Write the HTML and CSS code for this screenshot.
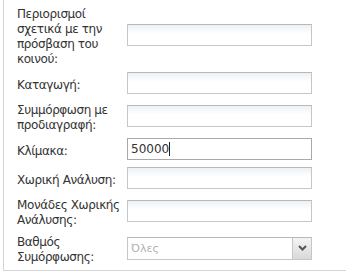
FILE: index.html
```html
<!DOCTYPE html>
<html lang="el">
	<head>
		<meta charset="UTF-8" />
		<title>Φίλτρα</title>
		<link rel="stylesheet" href="styles.css">
	</head>
	<body>
		<div class="panel">
			<div class="form">
				<label class="label">Περιορισμοί σχετικά με την πρόσβαση του κοινού:</label>
				<input class="field" type="text" />

				<label class="label">Καταγωγή:</label>
				<input class="field" type="text" />

				<label class="label">Συμμόρφωση με προδιαγραφή:</label>
				<input class="field" type="text" />

				<label class="label">Κλίμακα:</label>
				<div class="field focus"><span>50000</span><i class="caret"></i></div>

				<label class="label">Χωρική Ανάλυση:</label>
				<input class="field" type="text" />

				<label class="label">Μονάδες Χωρικής Ανάλυσης:</label>
				<input class="field" type="text" />

				<label class="label">Βαθμός Συμόρφωσης:</label>
				<div class="field select">
					<span class="placeholder">Όλες</span>
					<span class="trigger">
						<svg width="9" height="6" viewBox="0 0 9 6"><path d="M1 1 L4.5 4.5 L8 1" fill="none" stroke="#555" stroke-width="2"/></svg>
					</span>
				</div>
			</div>
		</div>
	</body>
</html>
```

FILE: styles.css
```css
body {
	margin: 0;
	padding: 0;
	background: #fff;
	font-family: "DejaVu Sans", Tahoma, sans-serif;
	font-size: 12px;
	color: #333;
}

.panel {
	width: 335px;
	margin-left: 3px;
	border: 1px solid #d4d4d4;
	border-top: none;
	padding: 5px 0 7px 13px;
}

.form {
	display: grid;
	grid-template-columns: 110px 185px;
	row-gap: 7px;
	align-items: center;
}

.label {
	line-height: 15px;
	letter-spacing: -0.4px;
	padding-top: 2px;
	margin-bottom: -2px;
}

.field {
	box-sizing: border-box;
	width: 185px;
	height: 22px;
	margin: 0;
	padding: 0 3px;
	border: 1px solid #c6c6c6;
	border-top-color: #b8b8b8;
	background: linear-gradient(#edf1f5, #fff 45%);
	font-family: "DejaVu Sans", Tahoma, sans-serif;
	font-size: 12px;
	color: #333;
	outline: none;
}

.focus {
	display: flex;
	align-items: center;
	border-color: #a9a9a9;
	background: #fff;
}

.caret {
	width: 1px;
	height: 14px;
	background: #222;
}

.select {
	display: flex;
	align-items: center;
	justify-content: space-between;
	height: 23px;
	padding: 0 0 0 3px;
	background: #fff;
}

.placeholder {
	color: #b0b0b0;
	font-size: 11px;
}

.trigger {
	display: flex;
	align-items: center;
	justify-content: center;
	width: 18px;
	height: 21px;
	border-left: 1px solid #c6c6c6;
	background: linear-gradient(#f4f4f4, #d9d9d9);
}
```
